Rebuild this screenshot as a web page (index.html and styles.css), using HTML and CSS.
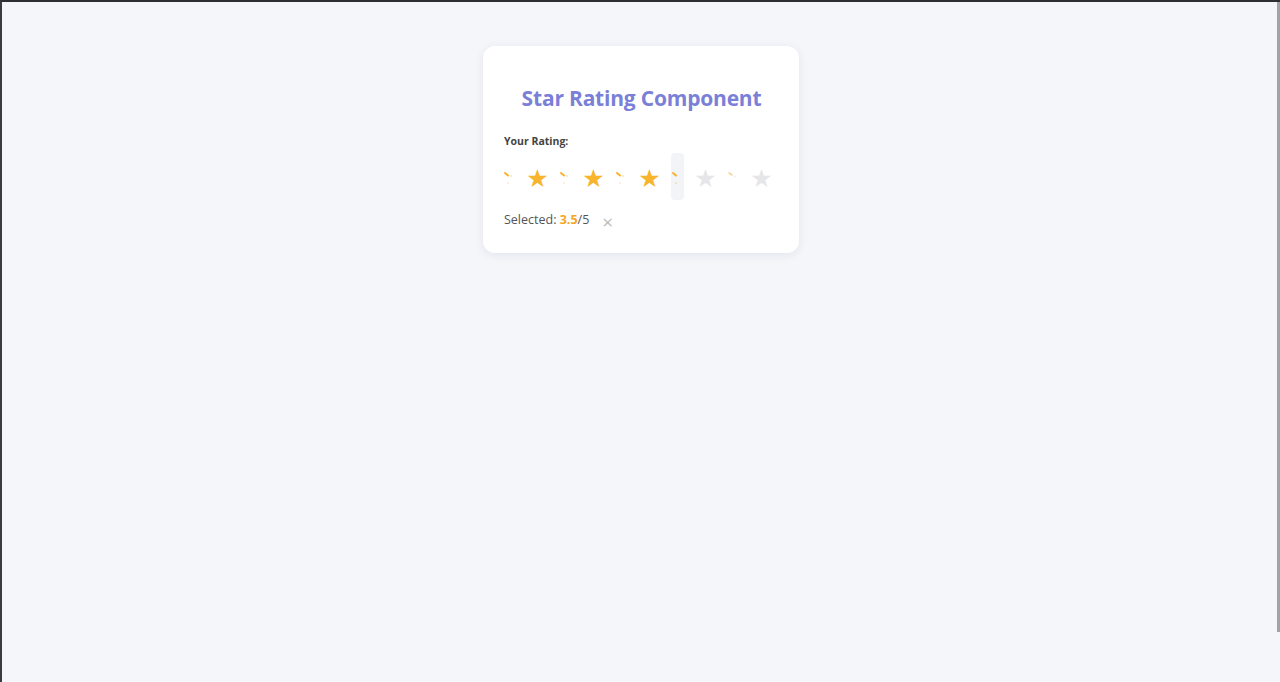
FILE: index.html
```html
<!DOCTYPE html>
<html lang="en">
<head>
<meta charset="utf-8">
<title>Star Rating Component</title>
<link rel="stylesheet" href="styles.css">
</head>
<body>
<div class="frame">
  <main class="page">
    <section class="card">
      <h2 class="title">Star Rating Component</h2>
      <div class="label">Your Rating:</div>
      <div class="stars">
        <span class="half"><svg class="sliver" width="13" height="20" viewBox="0 0 13 20"><path d="M2 4 L5 6.5" stroke="#f7b32b" stroke-width="2" stroke-linecap="round"/><circle cx="8" cy="7" r="1" fill="#f3e3bb"/><circle cx="5" cy="14" r="1" fill="#f8ecd0"/></svg></span>
        <span class="star on">★</span>
        <span class="half"><svg class="sliver" width="13" height="20" viewBox="0 0 13 20"><path d="M2 4 L5 6.5" stroke="#f7b32b" stroke-width="2" stroke-linecap="round"/><circle cx="8" cy="7" r="1" fill="#f3e3bb"/><circle cx="5" cy="14" r="1" fill="#f8ecd0"/></svg></span>
        <span class="star on">★</span>
        <span class="half"><svg class="sliver" width="13" height="20" viewBox="0 0 13 20"><path d="M2 4 L5 6.5" stroke="#f7b32b" stroke-width="2" stroke-linecap="round"/><circle cx="8" cy="7" r="1" fill="#f3e3bb"/><circle cx="5" cy="14" r="1" fill="#f8ecd0"/></svg></span>
        <span class="star on">★</span>
        <span class="half active"><svg class="sliver" width="13" height="20" viewBox="0 0 13 20"><path d="M2 4 L5 6.5" stroke="#f7b32b" stroke-width="2" stroke-linecap="round"/><circle cx="5" cy="14" r="1" fill="#f5e0a8"/></svg></span>
        <span class="star off">★</span>
        <span class="half"><svg class="sliver" width="13" height="20" viewBox="0 0 13 20"><path d="M2 4 L5 6" stroke="#f3d79a" stroke-width="1.6" stroke-linecap="round"/><circle cx="8" cy="7.5" r="0.9" fill="#eeeeee"/></svg></span>
        <span class="star off">★</span>
      </div>
      <div class="selected">
        <span>Selected: <b class="value">3.5</b>/5</span>
        <span class="clear">×</span>
      </div>
    </section>
  </main>
  <div class="scroll"><div class="thumb"></div></div>
</div>
</body>
</html>
```
FILE: styles.css
```css
html, body {
  margin: 0;
  padding: 0;
  height: 100%;
}
body {
  background: #f5f6fa;
  font-family: "Open Sans", "Noto Sans", sans-serif;
  overflow: hidden;
}
.frame {
  display: flex;
  height: 682px;
  box-sizing: border-box;
  border-top: 2px solid #2e2e34;
  border-left: 2px solid #3a3a40;
}
.page {
  flex: 1;
  display: flex;
  justify-content: center;
  align-items: flex-start;
  padding-top: 44px;
  padding-left: 3px;
}
.scroll {
  width: 3px;
  display: flex;
  flex-direction: column;
}
.thumb {
  height: 630px;
  background: #a3a3a6;
}
.card {
  width: 316px;
  box-sizing: border-box;
  background: #fff;
  border-radius: 12px;
  box-shadow: 0 2px 10px rgba(30, 40, 90, 0.08);
  padding: 38px 20px 22px 21px;
}
.title {
  margin: 0 0 22px;
  text-align: center;
  color: #7a7fd8;
  font-size: 21px;
  font-weight: 700;
  letter-spacing: -0.2px;
  line-height: 28px;
}
.label {
  font-size: 10.5px;
  font-weight: 700;
  color: #444;
  line-height: 14px;
  margin-bottom: 5px;
}
.stars {
  display: flex;
  align-items: center;
  gap: 6px;
  margin-left: -1px;
  height: 47px;
}
.half {
  width: 13px;
  height: 47px;
  display: flex;
  align-items: center;
  padding-top: 4px;
  box-sizing: border-box;
  border-radius: 4px;
}
.half.active {
  background: #f3f4f7;
}
.sliver {
  display: block;
}
.star {
  width: 31px;
  text-align: center;
  font-size: 25px;
  line-height: 30px;
  padding-top: 5px;
  font-family: "DejaVu Sans", sans-serif;
}
.star.on { color: #f8b42c; }
.star.off { color: #e6e6e8; }
.selected {
  margin-top: 9px;
  font-size: 12.5px;
  color: #555;
  display: flex;
  align-items: center;
  gap: 13px;
  line-height: 18px;
}
.value {
  color: #f5a623;
  font-weight: 700;
}
.clear {
  color: #bbb;
  font-size: 19px;
  margin-top: 4px;
}
```
